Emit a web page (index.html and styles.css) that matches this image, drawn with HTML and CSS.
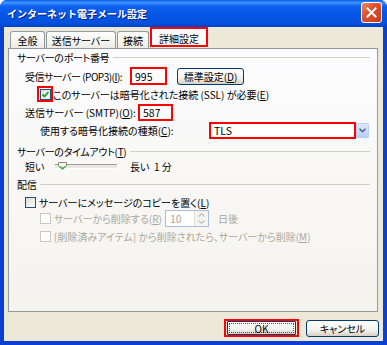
FILE: index.html
```html
<!DOCTYPE html>
<html lang="ja">
<head>
    <meta charset="UTF-8">
    <title>インターネット電子メール設定</title>
    <link rel="stylesheet" href="styles.css">
</head>
<body>
    <div class="window">
        <div class="titlebar">
            <span class="title">インターネット電子メール設定</span>
            <span class="close">
                <svg width="11" height="11" viewBox="0 0 11 11"><path d="M1.5 1.5 L9.5 9.5 M9.5 1.5 L1.5 9.5" stroke="#fff" stroke-width="2" stroke-linecap="square"/></svg>
            </span>
        </div>
        <div class="frame">
            <div class="tabs">
                <div class="tab w-general">全般</div>
                <div class="tab w-send">送信サーバー</div>
                <div class="tab w-conn">接続</div>
                <div class="tab active">詳細設定</div>
            </div>
            <div class="panel">
                <div class="group"><span>サーバーのポート番号</span><i class="rule"></i></div>

                <div class="row r-pop">
                    <span class="label w-pop">受信サーバー (POP3)(<u>I</u>):</span>
                    <span class="field mark w-port">995</span>
                    <span class="btn btn-std">標準設定(<u>D</u>)</span>
                </div>

                <div class="row r-chk">
                    <span class="mark-box"><span class="check checked">
                        <svg width="9" height="9" viewBox="0 0 9 9"><path d="M1.5 4.5 L3.5 6.5 L7.5 2" fill="none" stroke="#21a121" stroke-width="1.8"/></svg>
                    </span></span>
                    <span>このサーバーは暗号化された接続 (SSL) が必要(<u>E</u>)</span>
                </div>

                <div class="row r-smtp">
                    <span class="label w-smtp">送信サーバー (SMTP)(<u>O</u>):</span>
                    <span class="field mark w-port2">587</span>
                </div>

                <div class="row r-enc">
                    <span class="label w-enc">使用する暗号化接続の種類(<u>C</u>):</span>
                    <span class="field mark w-select">TLS</span>
                    <span class="drop">
                        <svg width="7" height="5" viewBox="0 0 7 5"><path d="M0.5 0.8 L3.5 3.8 L6.5 0.8" fill="none" stroke="#4d6185" stroke-width="1.5"/></svg>
                    </span>
                </div>

                <div class="group g-timeout"><span>サーバーのタイムアウト(<u>T</u>)</span><i class="rule"></i></div>

                <div class="row r-slider">
                    <span class="w-short">短い</span>
                    <span class="track">
                        <svg class="thumb" width="9" height="8" viewBox="0 0 9 8"><path d="M0.5 0.5 H8.5 V4 L4.5 7.5 L0.5 4 Z" fill="#f4f3ee" stroke="#8a8a80"/><path d="M2 4.5 L4.5 6.5 L7 4.5" fill="none" stroke="#3db53d" stroke-width="1.2"/></svg>
                    </span>
                    <span>長い&nbsp;&nbsp;1 分</span>
                </div>

                <div class="group g-delivery"><span>配信</span><i class="rule"></i></div>

                <div class="row r-copy">
                    <span class="check"></span>
                    <span>サーバーにメッセージのコピーを置く(<u>L</u>)</span>
                </div>

                <div class="row r-del disabled">
                    <span class="check off"></span>
                    <span class="w-del">サーバーから削除する(<u>R</u>)</span>
                    <span class="spin">
                        <span class="spin-val">10</span>
                        <span class="spin-btns">
                            <svg width="7" height="4" viewBox="0 0 7 4"><path d="M0.5 3.5 L3.5 0.7 L6.5 3.5" fill="none" stroke="#c3c3bd" stroke-width="1.2"/></svg>
                            <svg width="7" height="4" viewBox="0 0 7 4"><path d="M0.5 0.5 L3.5 3.3 L6.5 0.5" fill="none" stroke="#c3c3bd" stroke-width="1.2"/></svg>
                        </span>
                    </span>
                    <span class="days">日後</span>
                </div>

                <div class="row r-items disabled">
                    <span class="check off"></span>
                    <span>[削除済みアイテム] から削除されたら、サーバーから削除(<u>M</u>)</span>
                </div>
            </div>
            <div class="buttons">
                <span class="ok-mark"><span class="btn btn-ok"><span class="focus">OK</span></span></span>
                <span class="btn btn-cancel">キャンセル</span>
            </div>
        </div>
    </div>
</body>
</html>
```

FILE: styles.css
```css
body {
    margin: 0;
    font-family: "Noto Sans CJK JP", "Noto Sans", sans-serif;
    font-size: 10px;
    font-feature-settings: "palt";
    color: #000;
    background: #fff;
    white-space: nowrap;
}

u {
    text-decoration: underline;
    text-underline-offset: 1px;
}

.window {
    width: 387px;
    height: 345px;
    box-sizing: border-box;
    display: flex;
    flex-direction: column;
    background: #0a3fd2;
    border-radius: 7px 7px 0 0;
    overflow: hidden;
}

.titlebar {
    height: 27px;
    flex: none;
    display: flex;
    align-items: center;
    padding: 0 5px 0 7px;
    background: linear-gradient(to bottom, #0a5fe4 0%, #3d95ff 10%, #0d62ee 22%, #0456e6 55%, #0451dd 85%, #0342c6 100%);
}

.title {
    flex: 1;
    color: #fff;
    font-weight: bold;
    font-size: 10px;
    font-feature-settings: normal;
    text-shadow: 1px 1px 0 #0b237e;
}

.close {
    width: 19px;
    height: 19px;
    margin-top: -2px;
    border: 1px solid #fff;
    border-radius: 3px;
    background: linear-gradient(135deg, #ec8a6c 0%, #dd5433 40%, #c93a18 100%);
    display: flex;
    align-items: center;
    justify-content: center;
}

.frame {
    flex: 1;
    margin: 0 4px 4px;
    background: #ece9d8;
    padding: 2px 4px 0 4px;
    display: flex;
    flex-direction: column;
}

/* tabs */
.tabs {
    height: 19px;
    display: flex;
    align-items: flex-end;
    gap: 1px;
    padding-left: 2px;
}

.tab {
    height: 17px;
    box-sizing: border-box;
    border: 1px solid #919b9c;
    border-bottom: none;
    border-radius: 3px 3px 0 0;
    background: linear-gradient(to bottom, #fff, #ecebe6);
    display: flex;
    align-items: center;
    justify-content: center;
    padding-top: 1px;
}

.w-general { width: 35px; }
.w-send { width: 70px; }
.w-conn { width: 32px; }

.tab.active {
    width: 58px;
    height: 20px;
    border: 2px solid #f00;
    border-radius: 0;
    background: #fcfcfe;
    margin-bottom: 1px;
    padding-top: 2px;
}

.panel {
    height: 264px;
    box-sizing: border-box;
    margin-right: 1px;
    border: 1px solid #919b9c;
    background: linear-gradient(to bottom, #fcfcfe, #f4f3ee);
    padding: 0 7px 0 8px;
    display: flex;
    flex-direction: column;
}

/* group headings */
.group {
    height: 16px;
    flex: none;
    display: flex;
    align-items: center;
    gap: 4px;
    letter-spacing: -0.3px;
}

.group .rule {
    flex: 1;
    height: 1px;
    background: #d0d0bf;
    margin-top: 1px;
}

.g-timeout { margin-top: 4px; }
.g-delivery { margin-top: 3px; }

.row {
    display: flex;
    align-items: center;
    flex: none;
}

.label {
    flex: none;
}

.r-pop { height: 20px; margin-top: 1px; padding-left: 8px; }
.r-chk { height: 16px; padding-left: 20px; }
.r-smtp { height: 18px; margin-top: 1px; padding-left: 8px; }
.r-enc { height: 18px; padding-left: 23px; }
.r-slider { height: 14px; padding-left: 8px; }
.r-copy { height: 16px; margin-top: 2px; padding-left: 8px; }
.r-del { height: 17px; padding-left: 23px; }
.r-items { height: 16px; margin-top: 1px; padding-left: 23px; }

.w-pop { width: 105px; letter-spacing: -0.5px; }
.w-smtp { width: 113px; }
.w-enc { width: 169px; }
.w-short { width: 30px; }
.w-del { width: 111px; }

/* fields */
.field {
    height: 17px;
    box-sizing: border-box;
    background: #fff;
    border: 1px solid #7f9db9;
    display: flex;
    align-items: center;
    padding-left: 3px;
    font-size: 10.5px;
}

.field.mark {
    border: 2px solid #f00;
}

.w-port { width: 37px; height: 18px; }
.w-port2 { width: 35px; }
.w-select { width: 147px; }

.drop {
    width: 13px;
    height: 15px;
    box-sizing: border-box;
    border: 1px solid #b9cdf5;
    border-radius: 1px;
    background: linear-gradient(to bottom, #dfe9fd, #b8cdf7);
    display: flex;
    align-items: center;
    justify-content: center;
}

/* buttons */
.btn {
    height: 17px;
    box-sizing: border-box;
    border: 1px solid #003c74;
    border-radius: 3px;
    background: linear-gradient(to bottom, #fff 0%, #f3f3ef 60%, #d6d0c5 100%);
    display: flex;
    align-items: center;
    justify-content: center;
}

.btn-std {
    width: 67px;
    margin-left: 10px;
}

/* checkboxes */
.check {
    width: 11px;
    height: 11px;
    box-sizing: border-box;
    border: 1px solid #1c5180;
    background: linear-gradient(135deg, #dcdcd7, #fff);
    display: flex;
    align-items: center;
    justify-content: center;
    margin-right: 3px;
    flex: none;
}

.mark-box {
    width: 16px;
    height: 16px;
    box-sizing: border-box;
    border: 2px solid #f00;
    display: flex;
    align-items: center;
    justify-content: center;
}

.mark-box .check {
    margin-right: 0;
}

.check.off {
    border-color: #cac8bb;
    background: #fff;
}

.disabled {
    color: #aca899;
}

/* slider */
.track {
    width: 62px;
    height: 3px;
    margin: 0 13px 0 0;
    position: relative;
    border-top: 1px solid #9d9c99;
    background: #e8e7e2;
    border-bottom: 1px solid #fff;
}

.thumb {
    position: absolute;
    left: 3px;
    top: -3px;
}

/* spinner */
.spin {
    width: 44px;
    height: 17px;
    box-sizing: border-box;
    border: 1px solid #a9bedc;
    background: #fff;
    display: flex;
}

.spin-val {
    flex: 1;
    padding-left: 4px;
    display: flex;
    align-items: center;
    font-size: 10.5px;
}

.spin-btns {
    width: 13px;
    background: #f3f3ef;
    border-left: 1px solid #e2e2dc;
    display: flex;
    flex-direction: column;
    align-items: center;
    justify-content: space-around;
    padding: 1px 0;
}

.days {
    margin-left: 9px;
}

/* bottom buttons */
.buttons {
    display: flex;
    justify-content: flex-end;
    align-items: center;
    gap: 7px;
    margin-top: 7px;
    height: 18px;
}

.ok-mark {
    width: 75px;
    height: 18px;
    box-sizing: border-box;
    border: 2px solid #f00;
    display: flex;
    padding: 0 1px;
}

.btn-ok {
    flex: 1;
    height: 14px;
    border-radius: 1px;
}

.btn-ok .focus {
    flex: 1;
    align-self: stretch;
    margin: 1px;
    border: 1px dotted #555;
    display: flex;
    align-items: center;
    justify-content: center;
}

.btn-cancel {
    width: 73px;
}
```
